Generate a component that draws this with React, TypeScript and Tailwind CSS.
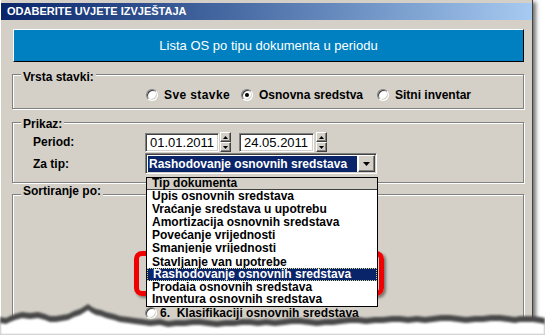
import React from 'react'

const sunken =
  'border border-t-[#808080] border-l-[#808080] border-b-white border-r-white shadow-[inset_1px_1px_0_#404040,inset_-1px_-1px_0_#d4d0c8]'
const raised =
  'border border-t-white border-l-white border-b-[#404040] border-r-[#404040] shadow-[inset_-1px_-1px_0_#808080] bg-[#d4d0c8]'

function Radio({ checked = false }: { checked?: boolean }) {
  return (
    <span className="inline-flex h-[12px] w-[12px] shrink-0 items-center justify-center rounded-full border border-t-[#808080] border-l-[#808080] border-b-white border-r-white bg-white shadow-[inset_1px_1px_0_#404040,inset_-1px_-1px_0_#d4d0c8]">
      {checked && <span className="h-[4px] w-[4px] rounded-full bg-black" />}
    </span>
  )
}

function Group({
  label,
  labelPos,
  className,
  children,
}: {
  label: string
  labelPos: string
  className: string
  children?: React.ReactNode
}) {
  return (
    <div
      className={`relative border border-[#808080] shadow-[1px_1px_0_#fff,inset_1px_1px_0_#fff] ${className}`}
    >
      <span
        className={`absolute left-[8px] bg-[#d4d0c8] px-[2px] text-[12px] font-bold leading-[14px] text-black ${labelPos}`}
      >
        {label}
      </span>
      {children}
    </div>
  )
}

function Spin() {
  return (
    <div className="flex h-[20px] w-[11px] flex-col">
      <div className={`flex flex-1 items-center justify-center ${raised}`}>
        <svg width="5" height="3" viewBox="0 0 5 3">
          <path d="M0 3 L2.5 0 L5 3Z" fill="#000" />
        </svg>
      </div>
      <div className={`flex flex-1 items-center justify-center ${raised}`}>
        <svg width="5" height="3" viewBox="0 0 5 3">
          <path d="M0 0 L5 0 L2.5 3Z" fill="#000" />
        </svg>
      </div>
    </div>
  )
}

function DateBox({ value, w }: { value: string; w: string }) {
  return (
    <div className={`flex h-[19px] items-center bg-white pl-[4px] text-[13px] leading-[17px] text-black ${w} ${sunken}`}>
      {value}
    </div>
  )
}

const items = [
  { t: 'Upis osnovnih sredstava', h: 'h-[13px]' },
  { t: 'Vraćanje sredstava u upotrebu', h: 'h-[13px]' },
  { t: 'Amortizacija osnovnih sredstava', h: 'h-[13px]' },
  { t: 'Povećanje vrijednosti', h: 'h-[13px]' },
  { t: 'Smanjenje vrijednosti', h: 'h-[11px] mb-[3px]' },
  { t: 'Stavljanje van upotrebe', h: 'h-[12px] leading-[12px]' },
  { t: 'Rashodovanje osnovnih sredstava', h: 'h-[13px]', sel: true },
  { t: 'Prodaja osnovnih sredstava', h: 'h-[10px] mb-[2px]' },
  { t: 'Inventura osnovnih sredstava', h: 'h-[13px]' },
]

const edge: [number, number][] = [
  [0, 22], [6, 23], [10, 21], [15, 19], [22, 17], [30, 18], [38, 17], [45, 19], [50, 21], [56, 21],
  [62, 20], [68, 19], [74, 16], [80, 14], [85, 11], [88, 9], [92, 12], [96, 14], [101, 15], [106, 17],
  [114, 19], [120, 21], [128, 22], [135, 23], [143, 24], [150, 25], [160, 24], [168, 26], [176, 25],
  [185, 25], [193, 24], [200, 24], [208, 25], [217, 26], [225, 25], [234, 25], [242, 24], [250, 24],
  [258, 25], [266, 24], [275, 25], [284, 24], [292, 23], [300, 23], [309, 24], [317, 25], [325, 24],
  [333, 24], [341, 23], [350, 22], [358, 22], [366, 23], [375, 22], [383, 22], [392, 21], [400, 21],
  [408, 22], [417, 21], [425, 22], [433, 21], [441, 20], [450, 20], [458, 21], [466, 22], [475, 21],
  [483, 21], [491, 20], [500, 20], [508, 21], [515, 22], [520, 21], [527, 21], [533, 21], [540, 22],
  [545, 23],
]

const edgePath = (dy: number) =>
  'M' + edge.map(([x, y]) => `${x} ${y + dy}`).join(' L') + ' L545 40 L0 40 Z'

export default function App() {
  return (
    <div className="relative h-[335px] w-[545px] overflow-hidden bg-white font-['Liberation_Sans',Arial,sans-serif]">
      {/* dialog window */}
      <div className="flex h-[326px] w-[533px] flex-col border-l border-r border-l-white border-r-[#404040] bg-[#d4d0c8] pt-[3px] shadow-[3px_2px_4px_rgba(0,0,0,0.55)]">
        <div className="h-[17px] bg-linear-to-r from-[#0a246a] to-[#a6caf0] pl-[6px] text-[11px] font-bold leading-[17px] text-white">
          ODABERITE UVJETE IZVJEŠTAJA
        </div>

        <div className="flex flex-col pl-[11px] pr-[8px]">
          <div className="ml-[1px] mt-[9px] flex h-[33px] items-center justify-center border border-t-white border-l-white border-b-black border-r-black bg-[#0080c0] text-[13px] text-white">
            Lista OS po tipu dokumenta u periodu
          </div>

          {/* vrsta stavki */}
          <Group label="Vrsta stavki:" labelPos="-top-[5px]" className="mt-[12px] h-[35px] pl-[133px] pt-[13px]">
            <div className="flex h-[14px] items-center text-[12px] font-bold text-black">
              <div className="flex w-[95px] items-center gap-[6px]">
                <Radio />
                <span className="tracking-[0.4px]">Sve stavke</span>
              </div>
              <div className="flex w-[136px] items-center gap-[6px]">
                <Radio checked />
                <span>Osnovna sredstva</span>
              </div>
              <div className="flex items-center gap-[6px]">
                <Radio />
                <span>Sitni inventar</span>
              </div>
            </div>
          </Group>

          {/* prikaz */}
          <Group label="Prikaz:" labelPos="-top-[6px]" className="mt-[13px] h-[61px] pl-[20px] pt-[9px]">
            <div className="flex h-[20px] items-center">
              <span className="w-[112px] text-[12px] font-bold">Period:</span>
              <DateBox value="01.01.2011" w="w-[74px]" />
              <div className="ml-[1px]">
                <Spin />
              </div>
              <div className="ml-[8px]">
                <DateBox value="24.05.2011" w="w-[75px]" />
              </div>
              <div className="ml-[2px]">
                <Spin />
              </div>
            </div>
            <div className="mt-[1px] flex h-[21px] items-center">
              <span className="w-[112px] text-[12px] font-bold">Za tip:</span>
              <div className={`flex h-[21px] w-[232px] bg-white p-[1px] ${sunken}`}>
                <div className="ml-[1px] mt-[1px] flex h-[16px] flex-1 items-center bg-[#0a246a] pl-[1px] text-[12px] font-bold text-white">
                  Rashodovanje osnovnih sredstava
                </div>
                <div className={`ml-[1px] flex h-[17px] w-[17px] items-center justify-center ${raised}`}>
                  <svg width="7" height="4" viewBox="0 0 7 4">
                    <path d="M0 0 L7 0 L3.5 4Z" fill="#000" />
                  </svg>
                </div>
              </div>
            </div>
          </Group>

          {/* sortiranje */}
          <Group label="Sortiranje po:" labelPos="-top-[11px]" className="mt-[11px] h-[140px] pl-[132px] pt-[111px]">
            <div className="flex h-[14px] items-center gap-[2px] text-[12px] font-bold">
              <Radio />
              <span className="ml-[1px]">6.&nbsp;&nbsp;Klasifikaciji osnovnih sredstava</span>
            </div>
          </Group>
        </div>
      </div>

      {/* red highlight (under the open list) */}
      <div className="absolute left-[134px] top-[251px] h-[45px] w-[250px] rounded-[8px] border-[5px] border-[#f00000] shadow-[2px_2px_3px_rgba(0,0,0,0.45)]" />

      {/* open dropdown list */}
      <div className="absolute left-[146px] top-[177px] flex h-[130px] w-[232px] flex-col border border-black bg-white text-[12px] font-bold leading-[13px] text-black">
        <div className="h-[12px] border-b border-[#404040] bg-[#d4d0c8] pl-[5px] leading-[11px]">Tip dokumenta</div>
        {items.map((it) => (
          <div
            key={it.t}
            className={`overflow-hidden whitespace-nowrap pl-[5px] ${it.h} ${
              it.sel ? 'border border-dotted border-[#d8d890] bg-[#0a246a] pl-[4px] leading-[11px] text-white' : ''
            }`}
          >
            {it.t}
          </div>
        ))}
      </div>

      {/* torn paper edge */}
      <svg className="absolute left-0 top-[295px]" width="545" height="40" viewBox="0 0 545 40">
        <defs>
          <filter id="blur" x="-5%" y="-50%" width="110%" height="200%">
            <feGaussianBlur stdDeviation="1.3" />
          </filter>
        </defs>
        <path d={edgePath(0)} fill="#4a4a4a" filter="url(#blur)" />
        <path d={edgePath(6)} fill="#ffffff" filter="url(#blur)" />
      </svg>
    </div>
  )
}
